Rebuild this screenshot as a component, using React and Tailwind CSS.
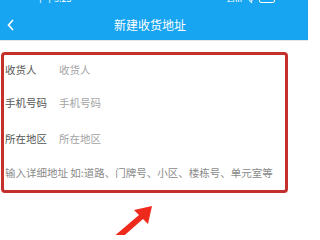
import React from 'react';

const rows = [
    { label: '收货人', hint: '收货人', h: 'h-[31px]' },
    { label: '手机号码', hint: '手机号码', h: 'h-[36px]' },
    { label: '所在地区', hint: '所在地区', h: 'h-[36px]' },
];

export default function App() {
    return (
        <div className="w-[313px] h-[235px] bg-white overflow-hidden" style={{ fontFamily: '"Noto Sans CJK SC", "Noto Sans", sans-serif' }}>
            <div className="flex">
                <div className="w-[308px] h-[40px] bg-[#17a5f2] relative">
                    {/* cropped status bar */}
                    <div className="absolute left-[36px] top-[-6px] text-[9px] leading-[10px] text-white">下午3:25</div>
                    <div className="absolute left-[226px] top-[-6px] text-[9px] leading-[10px] text-white flex gap-1 items-center">
                        <span>⊿ııı</span>
                        <span>令</span>
                        <span className="inline-block w-[16px] h-[8px] border border-white rounded-[2px]"></span>
                    </div>
                    <div className="flex items-center h-full pt-[10px]">
                        <svg width="10" height="14" viewBox="0 0 10 14" className="ml-[6px]">
                            <path d="M7 2 L2.5 7 L7 12" fill="none" stroke="#fff" strokeWidth="1.6" />
                        </svg>
                        <div className="flex-1 text-center text-white text-[12px] pr-[24px]">新建收货地址</div>
                    </div>
                </div>
            </div>
            <div className="h-[1px] bg-[#e6e6e6] w-[308px]"></div>

            <div className="mt-[11px] ml-[1px] w-[287px] h-[141px] border-[3px] border-[#c4302b] rounded-[4px] flex flex-col text-[10.5px] text-[#555]">
                {rows.map((r) => (
                    <div key={r.label} className={`flex items-center pl-[1px] ${r.h}`}>
                        <span className="w-[54px]">{r.label}</span>
                        <span className="text-[#a3a3a3]">{r.hint}</span>
                    </div>
                ))}
                <div className="flex items-center h-[34px] pl-[1px] text-[#8a8a8a]">
                    输入详细地址 如:道路、门牌号、小区、楼栋号、单元室等
                </div>
            </div>

            <svg width="313" height="45" viewBox="0 0 313 45" className="block">
                <path d="M112 45 L139 22 L134 17 L152 13 L148 31 L143 26 L118 48 Z" fill="#ee2a1c" />
            </svg>
        </div>
    );
}
